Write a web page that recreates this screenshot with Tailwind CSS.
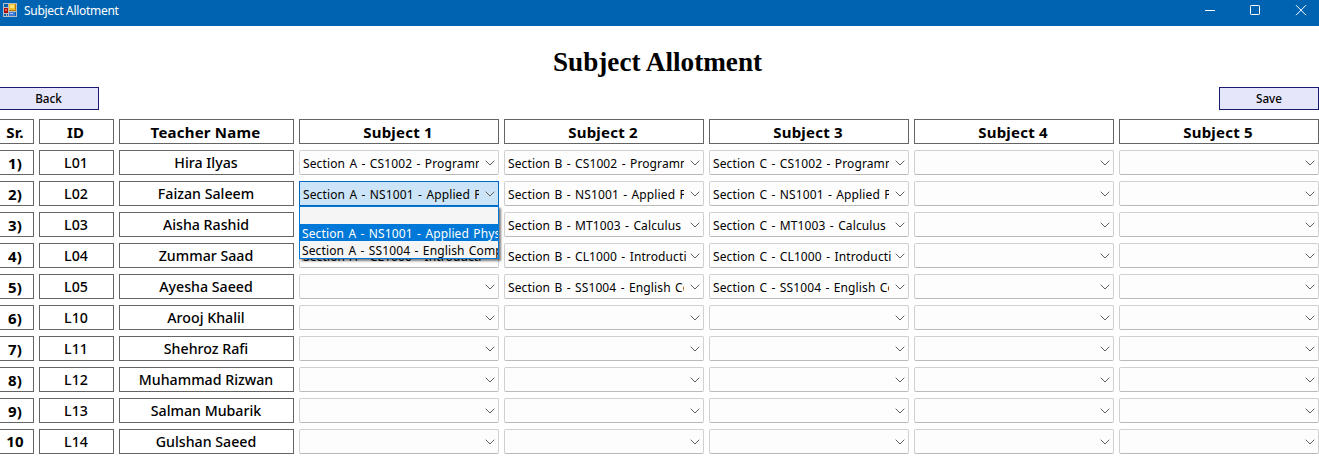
<!DOCTYPE html>
<html lang="en">
<head>
<meta charset="utf-8">
<title>Subject Allotment</title>
<script src="https://cdn.jsdelivr.net/npm/@tailwindcss/browser@4"></script>
</head>
<body class="h-[463px] w-[1319px] overflow-hidden bg-white font-['Noto_Sans','Open_Sans',sans-serif] text-black">
<header class="flex h-[26px] items-start bg-[#0063b1] text-white">
  <svg class="mt-[3px] ml-[3px] shrink-0" width="14" height="14" viewBox="0 0 14 14" shape-rendering="crispEdges">
    <path d="M0 0h14v14H0z" fill="#b9bcc0"/>
    <path d="M1 1h4v3H1zM1 11h2v2H1zM4 11h1v2H4zM12 9h1v4h-1z" fill="#0063b1"/>
    <path d="M6 1h7v7H6z" fill="#b87a0a"/><path d="M6 1h6v6H6z" fill="#f5bd28"/><path d="M7 2h4v3H7z" fill="#ffe37a"/>
    <path d="M1 5h4v5H1z" fill="#a30f0f"/><path d="M2 6h2v2H2z" fill="#ee5a4a"/>
    <path d="M6 9h6v4H6z" fill="#3f78dc"/><path d="M7 10h3v1H7z" fill="#a9caff"/>
  </svg>
  <span class="mt-[3px] ml-[7px] text-[12px] leading-4 tracking-[-0.3px]">Subject Allotment</span>
  <svg class="mt-1 ml-auto shrink-0" width="114" height="13" viewBox="0 0 114 13" fill="none" stroke="#fff">
    <path d="M0 6.5h10"/><rect x="45.5" y="1.500" width="9" height="9" rx=".7"/><path d="M91 1.200l10 10M101 1.200l-10 10"/>
  </svg>
</header>
<h1 class="mt-5 pr-1 text-center font-['Liberation_Serif',serif] text-[27.200px] leading-8 font-bold">Subject Allotment</h1>
<div class="mt-[9px] flex h-[23px] justify-between text-[11.700px]">
  <button class="w-[99px] border border-l-0 border-[#191970] bg-[#e6e6fa] pr-px leading-[21px] font-medium">Back</button>
  <button class="w-[100px] border border-[#191970] bg-[#e6e6fa] leading-[21px] font-medium">Save</button>
</div>
<main id="grid" class="mt-[9px] grid auto-rows-[25px] grid-cols-[34px_75px_175px_repeat(5,200px)] gap-x-[5px] gap-y-1.5"></main>
<script>
const teachers = [
  ['1)', 'L01', 'Hira Ilyas', 'CS1002 - Programming'],
  ['2)', 'L02', 'Faizan Saleem', 'NS1001 - Applied Physics'],
  ['3)', 'L03', 'Aisha Rashid', 'MT1003 - Calculus'],
  ['4)', 'L04', 'Zummar Saad', 'CL1000 - Introduction'],
  ['5)', 'L05', 'Ayesha Saeed', 'SS1004 - English Comp'],
  ['6)', 'L10', 'Arooj Khalil'], ['7)', 'L11', 'Shehroz Rafi'],
  ['8)', 'L12', 'Muhammad Rizwan'], ['9)', 'L13', 'Salman Mubarik'], ['10', 'L14', 'Gulshan Saeed']
];
const head = (t, edge) => `<div class="border border-[#646464] text-center text-[15px] leading-[24px] font-bold tracking-[0.2px] whitespace-nowrap ${edge ? 'border-l-0 pr-[3px]' : 'pr-[2px]'}">${t}</div>`;
const serial = t => `<div class="border border-l-0 border-[#646464] pr-[3px] text-center text-[15px] tracking-[0.15px] font-bold whitespace-nowrap ${t === '10' ? 'leading-[22px]' : 'leading-[24px]'}">${t}</div>`;
const cell = t => `<div class="border border-[#646464] pr-px text-center text-[14.200px] leading-[23px] font-medium whitespace-nowrap">${t}</div>`;
const menu = `<div class="absolute -left-px top-6 z-10 h-[53px] w-[200px] overflow-hidden border border-[#0078d7] bg-[#f5f5f5] pt-[17px] text-[12px] leading-[19px] tracking-[0.12px] [word-spacing:1.1px] whitespace-nowrap shadow-[2px_2px_2px_rgba(0,0,0,0.5)]">
  <div class="h-[17px] bg-[#0078d7] pl-0.5 text-white">Section A - NS1001 - Applied Physics</div>
  <div class="h-[17px] pl-0.5">Section A - SS1004 - English Comp</div></div>`;
const combo = (t, open) => `<div class="relative flex border ${open ? 'border-[#0067c0] bg-[#cce4f7]' : 'rounded-[2px] border-[#d0d0d0] border-b-[#bababa] bg-[#fdfdfd]'}">
  <span class="ml-[3px] overflow-hidden text-[12px] leading-[25px] tracking-[0.12px] [word-spacing:1.1px] whitespace-nowrap ${t.includes('Intro') ? 'w-[178px] mr-[4px]' : 'w-[176px] mr-[6px]'}">${t}</span>
  <svg class="mt-[9px] shrink-0" width="10" height="6" viewBox="0 0 10 6" fill="none" stroke="#606060"><path d="M.7.7L5 5L9.300.7"/></svg>${open ? menu : ''}</div>`;
let html = head('Sr.', true) + head('ID') + head('Teacher Name') + [1, 2, 3, 4, 5].map(n => head('Subject ' + n)).join('');
teachers.forEach(([sr, id, name, subject], row) => {
  html += serial(sr) + cell(id) + cell(name);
  for (let i = 0; i < 5; i++) {
    const filled = subject && i < 3 && !(row === 4 && i === 0);
    html += combo(filled ? `Section ${'ABC'[i]} - ${subject}` : '', row === 1 && i === 0);
  }
});
document.getElementById('grid').innerHTML = html;
</script>
</body>
</html>
